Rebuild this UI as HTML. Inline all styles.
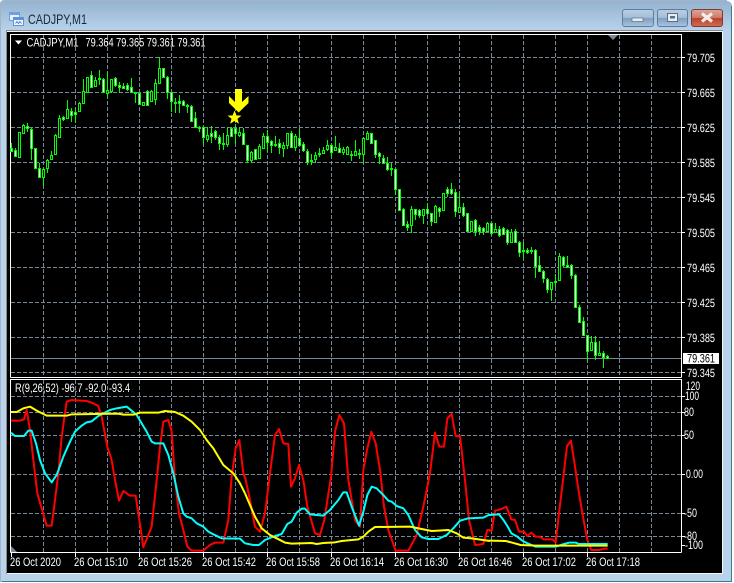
<!DOCTYPE html>
<html><head><meta charset="utf-8"><title>CADJPY,M1</title>
<style>
html,body{margin:0;padding:0;background:#fff;width:734px;height:583px;overflow:hidden}
svg{display:block;position:absolute;left:0;top:0}
text{font-family:"Liberation Sans",sans-serif;font-size:12px;fill:#fff}
.t{text-rendering:geometricPrecision}
</style></head><body>
<svg width="734" height="583" viewBox="0 0 734 583" xmlns="http://www.w3.org/2000/svg">
<defs>
<linearGradient id="tb" x1="0" y1="0" x2="0" y2="1"><stop offset="0" stop-color="#94b2cf"/><stop offset="1" stop-color="#b9d3ec"/></linearGradient>
<linearGradient id="bn" x1="0" y1="0" x2="0" y2="1"><stop offset="0" stop-color="#b9cee3"/><stop offset=".48" stop-color="#a3bdd8"/><stop offset=".52" stop-color="#7f9dbd"/><stop offset="1" stop-color="#a9c6e2"/></linearGradient>
<linearGradient id="cl" x1="0" y1="0" x2="0" y2="1"><stop offset="0" stop-color="#dea79c"/><stop offset=".48" stop-color="#cd7a68"/><stop offset=".52" stop-color="#b8402c"/><stop offset="1" stop-color="#cf6f55"/></linearGradient>
</defs>
<!-- window frame -->
<path d="M4 1H726Q732 1 732 7V582H1V4Q1 1 4 1Z" fill="#b8d2ec"/>
<path d="M4 1H726Q732 1 732 7V31H1V4Q1 1 4 1Z" fill="url(#tb)"/>
<path d="M.5 582V4Q.5 .5 4 .5H727" fill="none" stroke="#a4b4c4"/>
<path d="M1.5 581.5H731.5V6" fill="none" stroke="#3a7d92"/>
<!-- icon -->
<rect x="9.5" y="12.5" width="10" height="8" fill="#e8f1fb" stroke="#6f9fdd"/>
<rect x="10" y="13" width="9" height="2" fill="#6f9fdd"/>
<rect x="13.5" y="17.5" width="10" height="8" fill="#f2f7fd" stroke="#5f92d8"/>
<rect x="14" y="18" width="9" height="2" fill="#5f92d8"/>
<path d="M15.5 23.5l1.5-2 1.5 2 1.5-2 1.5 2" fill="none" stroke="#4a7cc4" stroke-width=".9"/>
<text x="28" y="24" textLength="59" lengthAdjust="spacingAndGlyphs" style="font-size:14px;fill:#16283c">CADJPY,M1</text>
<!-- buttons -->
<rect x="622.5" y="9.5" width="31" height="17" rx="2.5" fill="url(#bn)" stroke="#5e7c9b"/>
<rect x="632" y="18" width="11" height="3.5" fill="#e8edf2" stroke="#59708a" stroke-width=".7"/>
<rect x="657.5" y="9.5" width="30" height="17" rx="2.5" fill="url(#bn)" stroke="#5e7c9b"/>
<rect x="667.5" y="13.5" width="10" height="8" fill="#e8edf2" stroke="#59708a"/>
<rect x="670" y="16" width="5" height="2.5" fill="#59708a"/>
<rect x="691.5" y="9.5" width="31" height="17" rx="2.5" fill="url(#cl)" stroke="#7c3a34"/>
<path d="M702 13.5l10 8M712 13.5l-10 8" stroke="#f4ece8" stroke-width="3.2" fill="none"/>
<!-- client area -->
<rect x="6" y="30" width="717" height="544" fill="#f3f5f7"/>
<path d="M6.5 574V30.5H723" fill="none" stroke="#8a8a8a"/>
<rect x="7" y="32" width="715" height="541" fill="#000"/>
<!-- grid -->
<path d="M43.5 35V377M75.5 35V377M107.5 35V377M139.5 35V377M171.5 35V377M203.5 35V377M235.5 35V377M267.5 35V377M299.5 35V377M331.5 35V377M363.5 35V377M395.5 35V377M427.5 35V377M459.5 35V377M491.5 35V377M523.5 35V377M555.5 35V377M587.5 35V377M619.5 35V377M651.5 35V377
M43.5 380V552M75.5 380V552M107.5 380V552M139.5 380V552M171.5 380V552M203.5 380V552M235.5 380V552M267.5 380V552M299.5 380V552M331.5 380V552M363.5 380V552M395.5 380V552M427.5 380V552M459.5 380V552M491.5 380V552M523.5 380V552M555.5 380V552M587.5 380V552M619.5 380V552M651.5 380V552
M11 57.5H681M11 92.5H681M11 127.5H681M11 162.5H681M11 197.5H681M11 232.5H681M11 267.5H681M11 302.5H681M11 337.5H681M11 372.5H681
M11 396.5H681M11 412.5H681M11 435.5H681M11 474.5H681M11 513.5H681M11 536.5H681" fill="none" stroke="#778899" stroke-dasharray="4 2"/>
<path d="M11 358.5H681" stroke="#778899"/>
<!-- chart borders -->
<path d="M10.5 377.5V34.5H681.5V377.5M10.5 377.5H681.5M10.5 552.5V379.5H681.5V552.5M10.5 552.5H681.5" fill="none" stroke="#fff"/>
<path d="M682 57.5h3M682 92.5h3M682 127.5h3M682 162.5h3M682 197.5h3M682 232.5h3M682 267.5h3M682 302.5h3M682 337.5h3M682 372.5h3M682 396.5h3M682 412.5h3M682 435.5h3M682 474.5h3M682 513.5h3M682 536.5h3M682 545.5h3M682 386.5h0
M11.5 553v4M75.5 553v4M139.5 553v4M203.5 553v4M267.5 553v4M331.5 553v4M395.5 553v4M459.5 553v4M523.5 553v4M587.5 553v4" stroke="#fff" fill="none"/>
<path d="M608 35h10l-5 5z" fill="#778899"/>
<path d="M11 552v-6l6 6z" fill="#778899"/>
<!-- wicks -->
<path fill="none" stroke="#00ff00" d="M11.5 143V152M15.5 148V157M19.5 132V157M23.5 124V134M27.5 123V132M31.5 128V160M35.5 148V168M39.5 163V177M43.5 168V186M47.5 159V173M51.5 151V160M55.5 134V155M59.5 115V137M63.5 116V121M67.5 100V119M71.5 108V122M75.5 108V123M79.5 102V112M83.5 79V103M87.5 77V93M91.5 71V87M95.5 77V87M99.5 70V85M103.5 78V93M107.5 72V98M111.5 79V93M115.5 77V87M119.5 82V93M123.5 83V89M127.5 83V91M131.5 78V93M135.5 92V103M139.5 93V105M143.5 102V106M147.5 90V105M151.5 90V102M155.5 79V105M159.5 57V84M163.5 68V78M167.5 76V99M171.5 92V112M175.5 98V113M179.5 95V113M183.5 100V106M187.5 104V113M191.5 105V122M195.5 112V127M199.5 126V132M203.5 126V145M207.5 127V142M211.5 126V143M215.5 130V140M219.5 135V150M223.5 133V150M227.5 127V147M231.5 127V137M235.5 124V144M239.5 127V137M243.5 128V145M247.5 145V163M251.5 151V163M255.5 149V159M259.5 144V159M263.5 133V148M267.5 130V152M271.5 140V153M275.5 136V147M279.5 139V154M283.5 142V157M287.5 133V149M291.5 131V148M295.5 134V151M299.5 129V145M303.5 142V152M307.5 149V165M311.5 154V165M315.5 152V163M319.5 148V157M323.5 147V154M327.5 140V151M331.5 144V157M335.5 136V151M339.5 143V153M343.5 147V155M347.5 146V155M351.5 151V161M355.5 140V155M359.5 149V159M363.5 137V163M367.5 131V140M371.5 133V143M375.5 140V158M379.5 152V164M383.5 155V164M387.5 157V171M391.5 163V176M395.5 168V195M399.5 189V211M403.5 208V225M407.5 221V231M411.5 206V233M415.5 209V220M419.5 209V218M423.5 209V224M427.5 203V215M431.5 213V226M435.5 205V223M439.5 207V217M443.5 193V211M447.5 187V197M451.5 183V195M455.5 189V217M459.5 193V212M463.5 203V217M467.5 213V231M471.5 221V231M475.5 219V236M479.5 225V235M483.5 227V235M487.5 222V231M491.5 223V236M495.5 223V233M499.5 226V237M503.5 227V235M507.5 229V245M511.5 229V242M515.5 229V243M519.5 241V257M523.5 242V259M527.5 248V254M531.5 247V254M535.5 249V278M539.5 256V272M543.5 270V283M547.5 278V293M551.5 282V301M555.5 274V287M559.5 253V281M563.5 256V267M567.5 256V267M571.5 264V279M575.5 274V308M579.5 305V323M583.5 317V336M587.5 335V361M591.5 336V350M595.5 336V360M599.5 341V356M603.5 351V368M607.5 355V359"/>
<!-- bear bodies (white) -->
<path fill="#fff" stroke="#00ff00" d="M10.5 148.5h2v3h-2zM14.5 150.5h2v6h-2zM26.5 126.5h2v2h-2zM30.5 129.5h2v19h-2zM34.5 148.5h2v20h-2zM38.5 168.5h2v9h-2zM62.5 117.5h2v2h-2zM70.5 111.5h2v4h-2zM74.5 112.5h2v2h-2zM90.5 75.5h2v12h-2zM98.5 78.5h2v1h-2zM102.5 79.5h2v13h-2zM114.5 78.5h2v7h-2zM118.5 85.5h2v2h-2zM122.5 86.5h2v2h-2zM126.5 85.5h2v4h-2zM130.5 87.5h2v5h-2zM134.5 92.5h2v1h-2zM138.5 93.5h2v11h-2zM146.5 91.5h2v14h-2zM162.5 68.5h2v9h-2zM166.5 77.5h2v15h-2zM170.5 92.5h2v9h-2zM174.5 102.5h2v1h-2zM178.5 101.5h2v2h-2zM182.5 101.5h2v4h-2zM186.5 105.5h2v1h-2zM190.5 106.5h2v15h-2zM194.5 118.5h2v9h-2zM198.5 127.5h2v1h-2zM202.5 127.5h2v10h-2zM210.5 133.5h2v3h-2zM214.5 131.5h2v6h-2zM218.5 137.5h2v6h-2zM222.5 143.5h2v1h-2zM230.5 128.5h2v8h-2zM234.5 128.5h2v5h-2zM242.5 133.5h2v11h-2zM246.5 145.5h2v15h-2zM254.5 149.5h2v10h-2zM266.5 136.5h2v6h-2zM270.5 141.5h2v4h-2zM274.5 144.5h2v1h-2zM278.5 143.5h2v4h-2zM290.5 133.5h2v14h-2zM298.5 138.5h2v7h-2zM302.5 144.5h2v6h-2zM306.5 151.5h2v11h-2zM310.5 160.5h2v1h-2zM318.5 153.5h2v1h-2zM330.5 145.5h2v7h-2zM338.5 148.5h2v4h-2zM350.5 154.5h2v1h-2zM358.5 153.5h2v1h-2zM370.5 133.5h2v10h-2zM374.5 140.5h2v14h-2zM378.5 153.5h2v3h-2zM382.5 158.5h2v5h-2zM386.5 163.5h2v6h-2zM390.5 168.5h2v1h-2zM394.5 169.5h2v20h-2zM398.5 189.5h2v21h-2zM402.5 209.5h2v16h-2zM406.5 224.5h2v3h-2zM414.5 209.5h2v5h-2zM418.5 210.5h2v5h-2zM426.5 209.5h2v4h-2zM430.5 213.5h2v8h-2zM438.5 208.5h2v3h-2zM446.5 189.5h2v4h-2zM450.5 189.5h2v4h-2zM454.5 192.5h2v19h-2zM462.5 207.5h2v8h-2zM466.5 213.5h2v18h-2zM474.5 220.5h2v11h-2zM478.5 227.5h2v4h-2zM482.5 228.5h2v3h-2zM490.5 223.5h2v10h-2zM498.5 229.5h2v6h-2zM502.5 228.5h2v6h-2zM506.5 230.5h2v12h-2zM514.5 231.5h2v11h-2zM518.5 242.5h2v10h-2zM522.5 250.5h2v1h-2zM526.5 250.5h2v2h-2zM530.5 250.5h2v1h-2zM534.5 250.5h2v16h-2zM538.5 265.5h2v6h-2zM542.5 271.5h2v7h-2zM546.5 279.5h2v10h-2zM554.5 281.5h2v1h-2zM562.5 257.5h2v8h-2zM566.5 265.5h2v2h-2zM570.5 265.5h2v10h-2zM574.5 275.5h2v32h-2zM578.5 307.5h2v15h-2zM582.5 321.5h2v14h-2zM586.5 335.5h2v16h-2zM594.5 342.5h2v13h-2zM602.5 353.5h2v4h-2zM606.5 356.5h2v2h-2z"/>
<!-- bull bodies (hollow) -->
<path fill="#000" stroke="#00ff00" d="M18.5 132.5h2v25h-2zM22.5 125.5h2v8h-2zM42.5 169.5h2v8h-2zM46.5 160.5h2v8h-2zM50.5 155.5h2v4h-2zM54.5 135.5h2v19h-2zM58.5 118.5h2v19h-2zM66.5 109.5h2v9h-2zM78.5 103.5h2v8h-2zM82.5 91.5h2v12h-2zM86.5 77.5h2v15h-2zM94.5 80.5h2v6h-2zM106.5 90.5h2v3h-2zM110.5 79.5h2v12h-2zM142.5 102.5h2v3h-2zM150.5 91.5h2v10h-2zM154.5 83.5h2v16h-2zM158.5 68.5h2v15h-2zM206.5 135.5h2v4h-2zM226.5 135.5h2v9h-2zM238.5 132.5h2v3h-2zM250.5 152.5h2v8h-2zM258.5 146.5h2v12h-2zM262.5 136.5h2v12h-2zM282.5 145.5h2v3h-2zM286.5 133.5h2v12h-2zM294.5 136.5h2v11h-2zM314.5 155.5h2v4h-2zM322.5 150.5h2v3h-2zM326.5 145.5h2v4h-2zM334.5 147.5h2v3h-2zM342.5 149.5h2v3h-2zM346.5 147.5h2v7h-2zM354.5 151.5h2v4h-2zM362.5 138.5h2v16h-2zM366.5 133.5h2v6h-2zM410.5 209.5h2v16h-2zM422.5 209.5h2v6h-2zM434.5 206.5h2v16h-2zM442.5 193.5h2v17h-2zM458.5 207.5h2v5h-2zM470.5 221.5h2v10h-2zM486.5 223.5h2v8h-2zM494.5 229.5h2v3h-2zM510.5 232.5h2v10h-2zM550.5 282.5h2v7h-2zM558.5 256.5h2v24h-2zM590.5 342.5h2v8h-2zM598.5 353.5h2v2h-2z"/>
<!-- marker -->
<path d="M235 89H242V102L248.5 96V103L238.7 112.5L229 103V96L235 102Z" fill="#ffff00"/>
<path d="M234.5 110.5L236.4 115.4L241.5 115.6L237.5 118.8L238.9 123.8L234.5 121L230.1 123.8L231.5 118.8L227.5 115.6L232.6 115.4Z" fill="#ffff00"/>
<!-- price labels -->
<g class="t">
<text x="687" y="62" textLength="28" lengthAdjust="spacingAndGlyphs">79.705</text>
<text x="687" y="97" textLength="28" lengthAdjust="spacingAndGlyphs">79.665</text>
<text x="687" y="132" textLength="28" lengthAdjust="spacingAndGlyphs">79.625</text>
<text x="687" y="167" textLength="28" lengthAdjust="spacingAndGlyphs">79.585</text>
<text x="687" y="202" textLength="28" lengthAdjust="spacingAndGlyphs">79.545</text>
<text x="687" y="237" textLength="28" lengthAdjust="spacingAndGlyphs">79.505</text>
<text x="687" y="272" textLength="28" lengthAdjust="spacingAndGlyphs">79.465</text>
<text x="687" y="307" textLength="28" lengthAdjust="spacingAndGlyphs">79.425</text>
<text x="687" y="342" textLength="28" lengthAdjust="spacingAndGlyphs">79.385</text>
<text x="687" y="377" textLength="28" lengthAdjust="spacingAndGlyphs">79.345</text>
</g>
<rect x="683" y="353" width="36" height="11" fill="#fff"/>
<text x="687" y="362.5" textLength="28" lengthAdjust="spacingAndGlyphs" style="fill:#000">79.361</text>
<text x="686" y="390" textLength="14" lengthAdjust="spacingAndGlyphs">120</text>
<text x="685" y="400" textLength="14" lengthAdjust="spacingAndGlyphs">100</text>
<text x="684" y="416" textLength="10" lengthAdjust="spacingAndGlyphs">80</text>
<text x="684" y="439" textLength="10" lengthAdjust="spacingAndGlyphs">50</text>
<text x="686" y="478" textLength="17" lengthAdjust="spacingAndGlyphs">0.00</text>
<text x="684" y="517" textLength="13" lengthAdjust="spacingAndGlyphs">-50</text>
<text x="684" y="540" textLength="13" lengthAdjust="spacingAndGlyphs">-80</text>
<text x="685" y="549" textLength="18" lengthAdjust="spacingAndGlyphs">-100</text>
<!-- date labels -->
<text x="10" y="566" textLength="51" lengthAdjust="spacingAndGlyphs">26 Oct 2020</text>
<text x="74" y="566" textLength="54" lengthAdjust="spacingAndGlyphs">26 Oct 15:10</text>
<text x="138" y="566" textLength="54" lengthAdjust="spacingAndGlyphs">26 Oct 15:26</text>
<text x="202" y="566" textLength="54" lengthAdjust="spacingAndGlyphs">26 Oct 15:42</text>
<text x="266" y="566" textLength="54" lengthAdjust="spacingAndGlyphs">26 Oct 15:58</text>
<text x="330" y="566" textLength="54" lengthAdjust="spacingAndGlyphs">26 Oct 16:14</text>
<text x="394" y="566" textLength="54" lengthAdjust="spacingAndGlyphs">26 Oct 16:30</text>
<text x="458" y="566" textLength="54" lengthAdjust="spacingAndGlyphs">26 Oct 16:46</text>
<text x="522" y="566" textLength="54" lengthAdjust="spacingAndGlyphs">26 Oct 17:02</text>
<text x="586" y="566" textLength="54" lengthAdjust="spacingAndGlyphs">26 Oct 17:18</text>
<!-- header -->
<path d="M15 40.5h7l-3.5 4z" fill="#fff"/>
<text x="26.5" y="46.5" textLength="52" lengthAdjust="spacingAndGlyphs">CADJPY,M1</text>
<text x="85.5" y="46.5" textLength="120" lengthAdjust="spacingAndGlyphs">79.364 79.365 79.361 79.361</text>
<text x="15" y="392" textLength="115" lengthAdjust="spacingAndGlyphs">R(9,26,52) -96.7 -92.0 -93.4</text>
<!-- indicator lines -->
<g fill="none" stroke-width="6" stroke-linejoin="round">
<g stroke="#ff0000">
<path transform="translate(0,380) scale(.33333)" d="M33 122L60 122L72 118L80 90L90 150L100 240L112 340L125 385L140 437L155 437L165 360L175 280L185 170L200 65L215 60L260 63L280 70L295 78L305 110L322 200L335 240L345 300L357 362L370 333L390 347L407 347L418 420L430 502L455 440L468 320L480 200L490 125L505 120L515 155L525 300L537 400L550 450L562 500L575 512L610 512L630 495L645 488L670 488L685 420L695 290L707 205L718 180L730 280L735 295"/>
<path transform="translate(245,380) scale(.33333)" d="M0 290L15 360L30 440L45 455L60 400L75 280L90 165L102 147L115 190L130 192L138 320L150 295L162 255L175 300L187 380L210 460L225 465L238 420L258 290L270 155L283 105L297 130L310 300L330 420L345 440L355 270L367 205L379 155L392 190L405 270L417 380L430 450L452 512L490 512L515 465L535 380L555 280L570 158L583 200L597 200L607 115L620 102L632 168L645 168L660 300L672 420L690 495L715 492L727 450L735 450"/>
<path transform="translate(489,380) scale(.33333)" d="M0 452L8 452L18 392L35 388L52 380L67 418L78 420L90 455L105 455L115 468L127 458L140 470L150 470L165 478L190 478L200 487L210 400L222 300L234 198L246 182L258 260L270 340L282 410L295 480L307 510L330 510L345 506L356 506"/>
</g>
<g stroke="#00ffff">
<path transform="translate(0,380) scale(.33333)" d="M33 158L45 168L72 168L85 152L95 152L108 190L120 240L135 280L155 307L170 285L190 230L210 185L225 155L245 137L260 127L275 124L295 108L310 100L330 90L350 85L380 80L395 92L410 105L425 130L440 155L455 185L465 190L490 190L505 225L520 280L535 350L550 400L560 410L575 415L590 430L610 440L625 455L640 463L665 475L720 476L735 490"/>
<path transform="translate(245,380) scale(.33333)" d="M0 490L25 495L42 495L60 480L90 468L110 462L127 432L140 425L155 398L170 386L180 386L195 403L215 405L235 407L255 390L280 360L295 337L305 337L320 380L342 437L355 395L367 345L380 320L395 325L415 345L430 362L440 365L455 378L475 385L490 405L510 450L530 472L550 477L580 477L605 465L625 445L645 422L670 415L715 413L735 403"/>
<path transform="translate(489,380) scale(.33333)" d="M0 405L30 403L42 418L55 438L67 460L85 470L100 482L115 490L140 500L200 500L225 492L240 488L260 488L270 492L356 492"/>
</g>
<g stroke="#ffff00">
<path transform="translate(0,380) scale(.33333)" d="M33 96L50 96L70 85L90 80L110 92L140 107L200 107L215 103L355 101L370 104L400 104L420 98L475 98L495 93L525 96L550 107L575 125L600 150L620 180L640 205L670 255L700 280L720 310L735 340"/>
<path transform="translate(245,380) scale(.33333)" d="M0 340L15 375L30 410L50 445L75 465L95 475L120 488L140 491L200 489L215 492L235 489L270 487L290 483L340 478L355 470L370 455L390 441L495 440L530 447L560 453L580 452L610 450L635 460L655 473L680 475L735 483"/>
<path transform="translate(489,380) scale(.33333)" d="M0 482L50 483L70 488L95 495L140 497L356 497"/>
</g>
</g>
</svg>
</body></html>
